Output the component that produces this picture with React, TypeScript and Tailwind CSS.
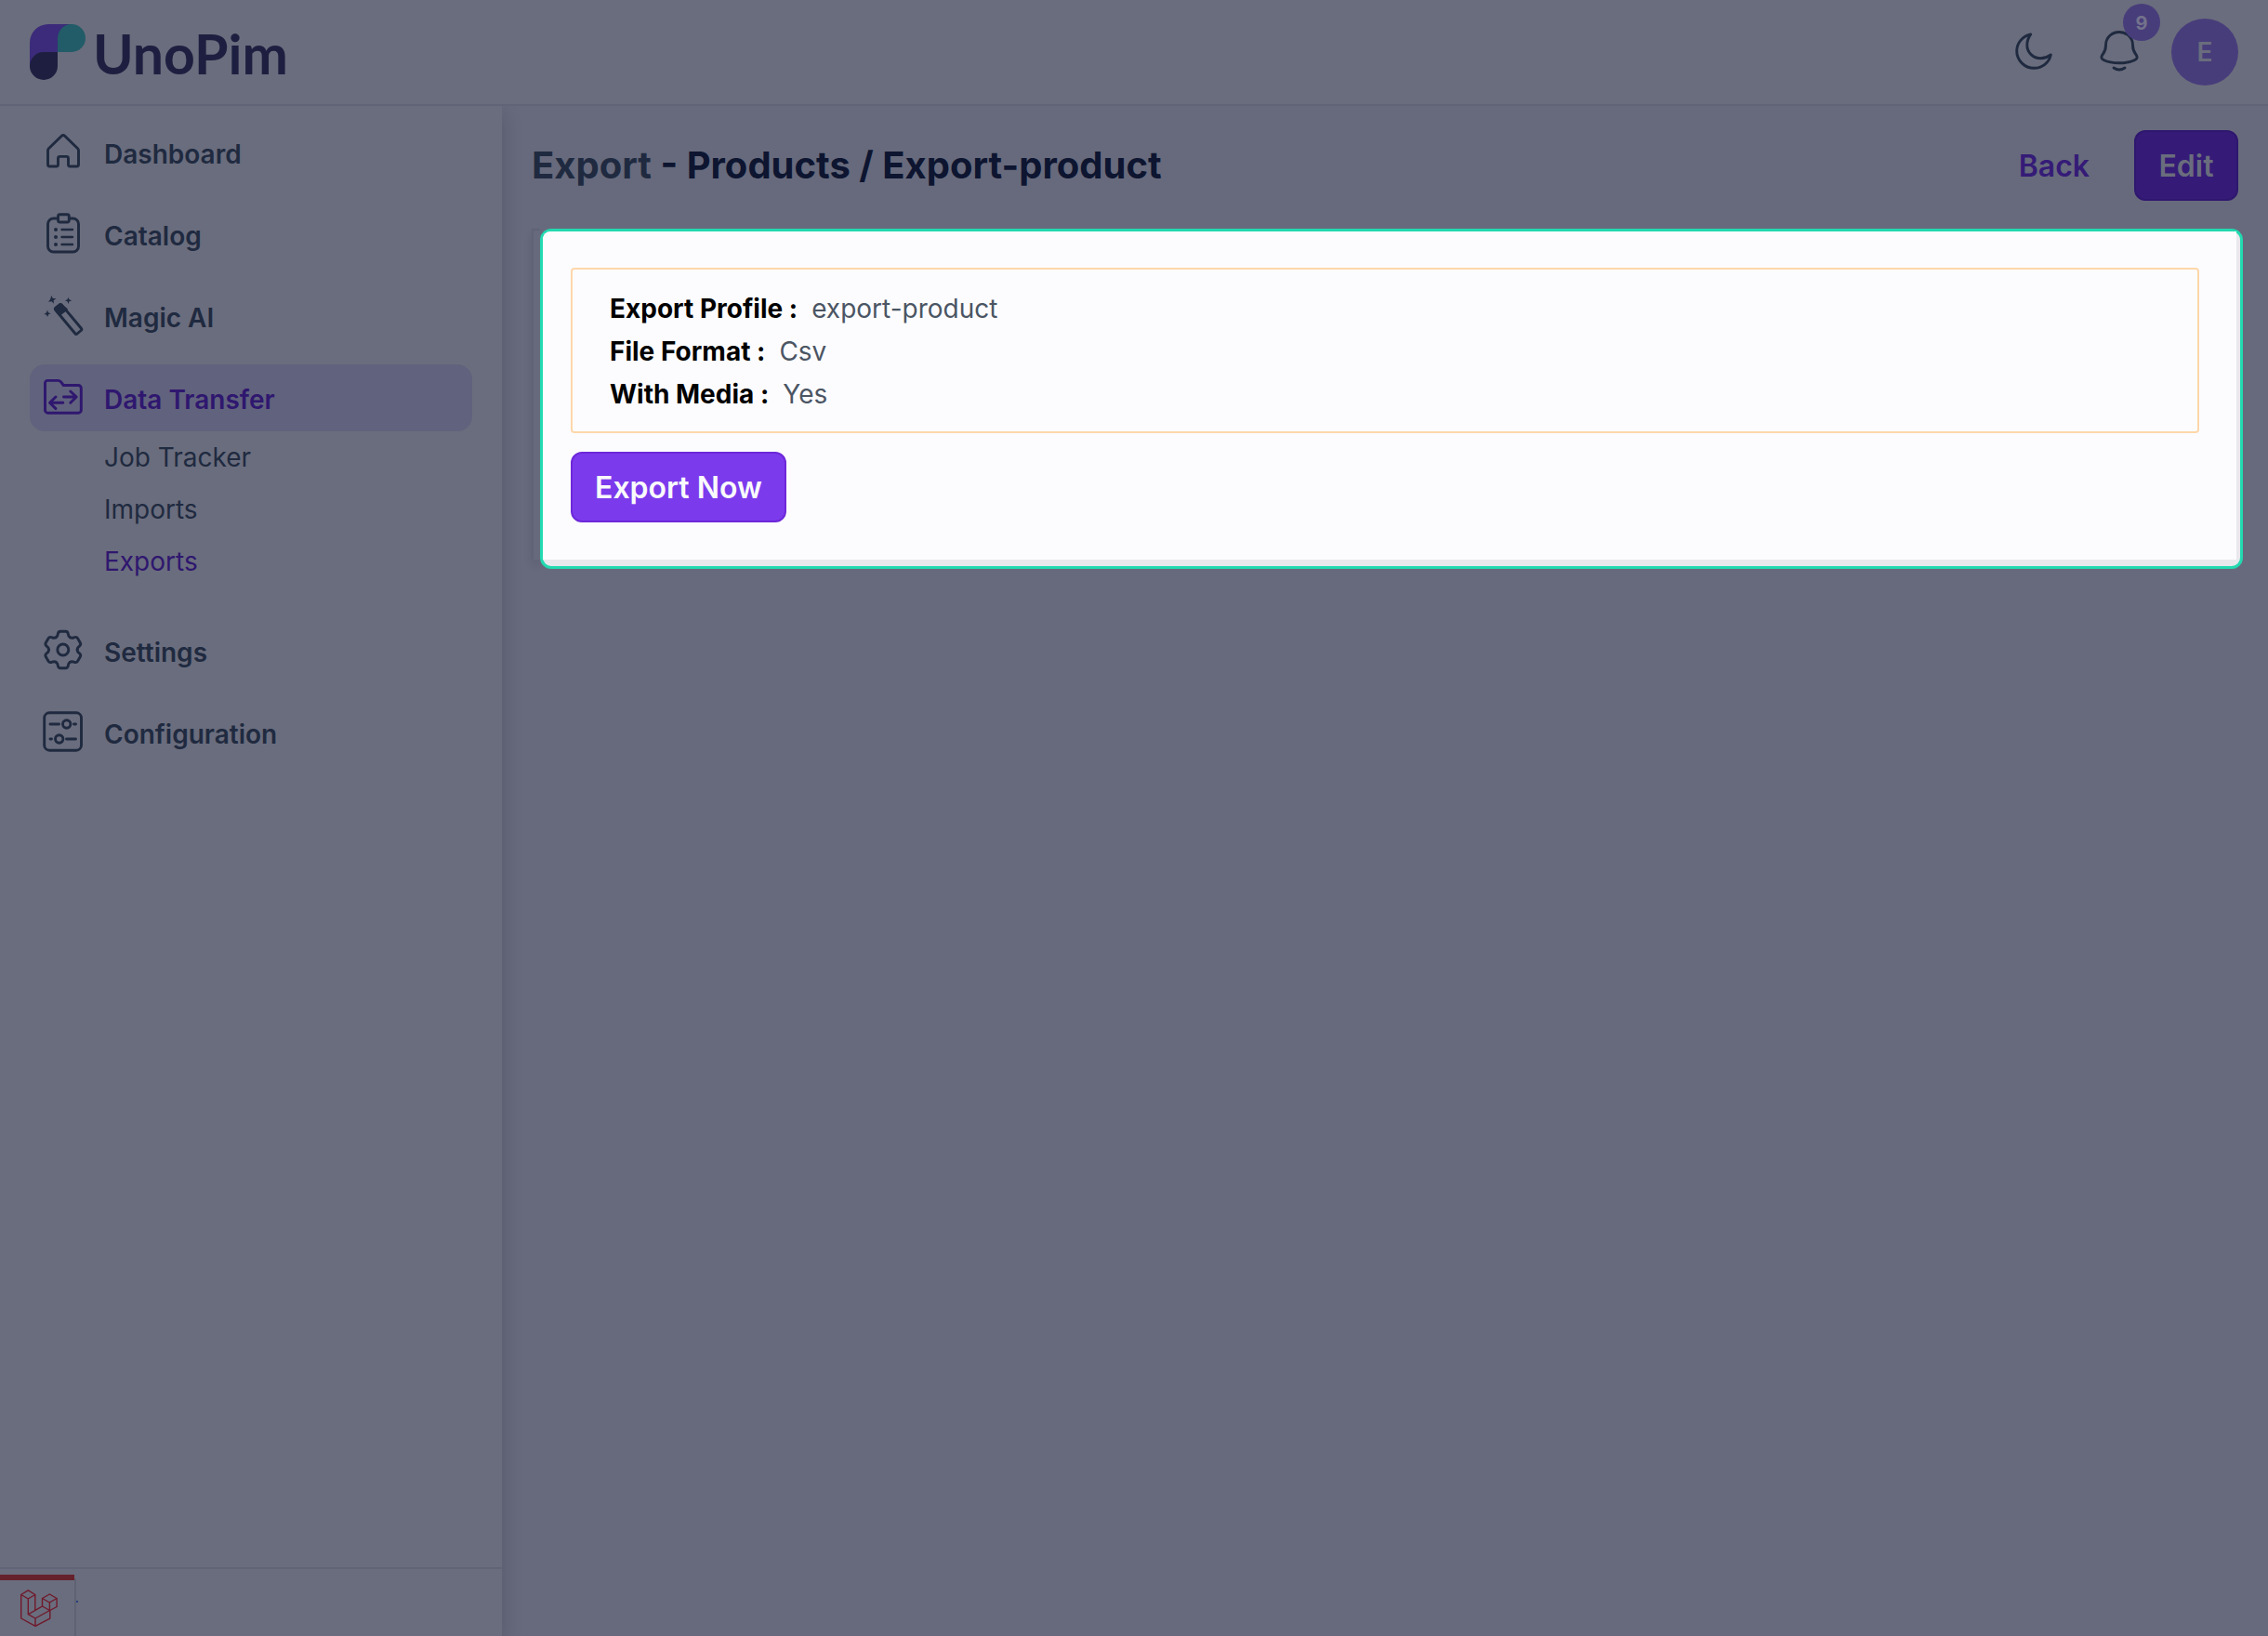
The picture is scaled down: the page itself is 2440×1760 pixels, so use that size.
import React from 'react';

type IconProps = { className?: string };

const iconProps = {
  viewBox: '0 0 48 48',
  fill: 'none',
  stroke: 'currentColor',
  strokeWidth: 2.9,
  strokeLinecap: 'round' as const,
  strokeLinejoin: 'round' as const,
  'aria-hidden': true,
};

const HomeIcon: React.FC<IconProps> = ({ className }) => (
  <svg {...iconProps} className={className}>
    <path d="M7.5 21.8a3 3 0 0 1 .9-2.1L22.3 6.2a2.4 2.4 0 0 1 3.4 0l13.9 13.5a3 3 0 0 1 .9 2.1V37a2 2 0 0 1-2 2h-7a2 2 0 0 1-2-2v-6.6a2 2 0 0 0-2-2h-7a2 2 0 0 0-2 2V37a2 2 0 0 1-2 2h-7a2 2 0 0 1-2-2z" />
  </svg>
);

const CatalogIcon: React.FC<IconProps> = ({ className }) => (
  <svg {...iconProps} className={className}>
    <path d="M18.5 7h-5a6 6 0 0 0-6 6v24a6 6 0 0 0 6 6h21a6 6 0 0 0 6-6V13a6 6 0 0 0-6-6h-4" />
    <rect x="18.5" y="2.8" width="11.8" height="8.2" rx="2" />
    <path d="M22.5 19H34M22.5 27H34M22.5 35H34" strokeWidth="2.4" />
    <g fill="currentColor" stroke="none">
      <circle cx="16" cy="19" r="2" />
      <circle cx="16" cy="27" r="2" />
      <circle cx="16" cy="35" r="2" />
    </g>
  </svg>
);

const MagicIcon: React.FC<IconProps> = ({ className }) => (
  <svg {...iconProps} className={className}>
    <path d="M20.2 11.9l-4.2 3.3a1.6 1.6 0 0 0-.2 2.3l21 25.3a1.6 1.6 0 0 0 2.2.2l4.2-3.5a1.6 1.6 0 0 0 .2-2.2L22.4 12.1a1.6 1.6 0 0 0-2.2-.2z" />
    <path d="M20.8 11.5l-5.5 4.5 5 6 7-5.2z" fill="currentColor" />
    <g fill="currentColor" stroke="none">
      <path d="M11.3 2l1.6 2.9 3.4.2-2.6 2.2.2 3.5-2.3-2.6-3.6.6 2.1-2.7z" />
      <path d="M29.5 3.8l1 2.5 2.7 1-2.7 1-1 2.7-1-2.7-2.6-1 2.6-1z" />
      <path d="M7 17.6l.9 2.6 2.7 1-2.5 1.1-.9 2.8-1.3-2.6-2.6-.6 2.5-1.3z" />
    </g>
  </svg>
);

const TransferIcon: React.FC<IconProps> = ({ className }) => (
  <svg {...iconProps} className={className}>
    <path d="M4.5 8a2.6 2.6 0 0 1 2.6-2.6h11.4a4 4 0 0 1 2.9 1.3l2.9 3.8h16a3 3 0 0 1 3 3v23.7a3 3 0 0 1-3 3H7.5a3 3 0 0 1-3-3z" />
    <path d="M24.5 23H38M31.8 17l6.4 6-6.4 6.3M23.8 29.3H10M16 23l-6.5 6.3L16 35.6" />
  </svg>
);

const SettingsIcon: React.FC<IconProps> = ({ className }) => (
  <svg {...iconProps} className={className}>
    <g transform="translate(23.8 23)">
      <circle r="6" />
      {[0, 60, 120, 180, 240, 300].map((angle) => (
        <path
          key={angle}
          transform={`rotate(${angle})`}
          d="M-7.65 -13.25Q-5.7 -14.4 -5.6 -16.6Q-5.2 -19.8 -2.8 -19.8H2.8Q5.2 -19.8 5.6 -16.6Q5.7 -14.4 7.65 -13.25"
        />
      ))}
    </g>
  </svg>
);

const ConfigIcon: React.FC<IconProps> = ({ className }) => (
  <svg {...iconProps} className={className}>
    <rect x="3.7" y="2.8" width="39.8" height="40.4" rx="5.5" />
    <path d="M10 15h9.5M35.5 15h2M10 31h1.5M27.5 31h10" />
    <circle cx="27.7" cy="15" r="4.2" />
    <circle cx="19.7" cy="31" r="4.2" />
  </svg>
);

const MoonIcon: React.FC<IconProps> = ({ className }) => (
  <svg {...iconProps} className={className}>
    <path d="M20.7 4.9C12 7 5.7 14 5.7 22.8c0 10.2 8.4 18.5 18.6 18.5 8.7 0 16.2-5.8 18-14.3-3.8 2.8-7 3.8-10.8 3.8-8.2 0-14.7-6.3-14.7-14.3 0-4.5 1.6-8.4 3.9-11.6z" />
  </svg>
);

const BellIcon: React.FC<IconProps> = ({ className }) => (
  <svg {...iconProps} className={className}>
    <path d="M24 2.5C15.7 2.5 9.5 8.7 9.5 16.5c0 4.6-.6 6.6-3 9.5-2.2 2.8-2.4 5 .6 6.5C12 35 18 35.8 24 35.8S36 35 40.9 32.5c3-1.5 2.8-3.7.6-6.5-2.4-2.9-3-4.9-3-9.5C38.5 8.7 32.3 2.5 24 2.5z" />
    <path d="M18 41q6 4 12 0" />
  </svg>
);

const LaravelIcon: React.FC<IconProps> = ({ className }) => (
  <svg viewBox="0 0 40 40" fill="none" stroke="currentColor" strokeWidth="1.4" strokeLinejoin="round" className={className} aria-hidden="true">
    <path d="M.7 5.5L8.3.8l7.5 4.7v17l4-2.3 3.7-2.2V9.5l7.8-4.5 7.8 4.5v9l-7.3 4v8.6L16 39.3.7 31z" />
    <path d="M.7 5.5L8.3 10l7.5-4.5M8.300 10v16.700l7.700 4.300 15.500-8.500-8-4.500M16 31v8.300M8.300 26.700l7.500-4.200M23.500 9.500l7.800 4.500 7.800-4.500M31.400 14v8.500" />
  </svg>
);

const Logo = () => (
  <a href="#" aria-label="UnoPim" className="flex items-center gap-2 text-[#1e1f40]">
    <svg viewBox="0 0 60 60" className="h-[60px] w-[60px]" aria-hidden="true">
      <path d="M0 20A20 20 0 0 1 20 0H46V30H15L0 45z" fill="#3b2b7a" />
      <path d="M30 15A15 15 0 0 1 45 0a15 15 0 0 1 0 30H30z" fill="#225c68" />
      <path d="M0 45A15 15 0 0 1 15 30H30V45A15 15 0 0 1 0 45z" fill="#1e1f40" />
    </svg>
    <span className="pt-1 font-['Lato',sans-serif] text-[59px] leading-[60px] font-bold">UnoPim</span>
  </a>
);

const menuItems = [
  { label: 'Dashboard', icon: HomeIcon },
  { label: 'Catalog', icon: CatalogIcon },
  { label: 'Magic AI', icon: MagicIcon },
  {
    label: 'Data Transfer',
    icon: TransferIcon,
    active: true,
    children: [
      { label: 'Job Tracker' },
      { label: 'Imports' },
      { label: 'Exports', active: true },
    ],
  },
  { label: 'Settings', icon: SettingsIcon },
  { label: 'Configuration', icon: ConfigIcon },
];

const details = [
  { label: 'Export Profile', value: 'export-product' },
  { label: 'File Format', value: 'Csv' },
  { label: 'With Media', value: 'Yes' },
];

const Header = () => (
  <header className="relative z-20 flex h-[114px] items-center justify-between border-b-2 border-[#616476] bg-[#6a6d7d] px-8">
    <Logo />
    <div className="flex items-center">
      <button type="button" aria-label="Toggle dark mode" className="mr-11 text-[#1f2a40]">
        <MoonIcon className="h-12 w-12" />
      </button>
      <button type="button" aria-label="Notifications" className="relative mr-8 text-[#1f2a40]">
        <BellIcon className="h-12 w-12" />
        <span className="absolute -top-7 left-7 flex h-10 w-10 items-center justify-center rounded-full bg-[#483d7b] pt-[2px] text-[20px] font-bold text-[#73728c]">
          9
        </span>
      </button>
      <button type="button" aria-label="Account" className="h-[72px] w-[72px] rounded-full bg-[#483d7b] text-[28px] font-semibold text-[#6a6d7d]">
        E
      </button>
    </div>
  </header>
);

const Sidebar = () => (
  <aside className="relative z-10 flex w-[540px] shrink-0 flex-col bg-[#6a6d7d] shadow-[0_8px_20px_rgba(20,22,50,0.2)]">
    <nav className="flex flex-col gap-4 px-8 pt-[14px] text-[28px]">
      {menuItems.map((item) => {
        const Icon = item.icon;
        return (
          <div key={item.label}>
            <a
              href="#"
              className={`flex h-[72px] items-center gap-5 rounded-2xl px-3 font-semibold ${
                item.active ? 'bg-[#61627d] text-[#2f176f]' : 'text-[#1f2a40]'
              }`}
            >
              <Icon className="h-12 w-12" />
              <span className="pt-[3px]">{item.label}</span>
            </a>
            {item.children && (
              <div className="flex flex-col pb-4 pl-20">
                {item.children.map((child) => (
                  <a
                    key={child.label}
                    href="#"
                    className={`h-14 leading-[56px] ${child.active ? 'text-[#2f176f]' : 'text-[#1f2a40]'}`}
                  >
                    {child.label}
                  </a>
                ))}
              </div>
            )}
          </div>
        );
      })}
    </nav>

    <div className="mt-auto flex border-t-2 border-[#616476] pt-[6px]">
      <button
        type="button"
        aria-label="Open debug bar"
        className="flex h-[66px] w-20 items-start border-t-[6px] border-[#65212c] pt-[10px] pl-[22px] text-[#70192b]"
      >
        <LaravelIcon className="h-10 w-10" />
      </button>
      <div className="mt-1 w-[2px] bg-[#5f6273]" />
      <div className="mt-7 h-[2px] w-[2px] bg-[#23407a]" />
    </div>
  </aside>
);

const App = () => (
  <div className="flex min-h-screen flex-col bg-[#676a7c] font-['Inter',sans-serif]">
    <Header />
    <div className="flex flex-1">
      <Sidebar />
      <main className="min-w-0 flex-1 px-8 pt-[26px]">
        <div className="flex items-center justify-between">
          <h1 className="text-[40px] leading-[60px] font-bold text-[#0d1530]">
            <span className="text-[#1f2a40]">Export</span> - Products / Export-product
          </h1>
          <div className="flex items-center text-[32px] leading-[48px] font-semibold">
            <a href="#" className="mr-12 pt-[2px] text-[#351b77]">
              Back
            </a>
            <button type="button" className="min-w-28 rounded-xl border-2 border-[#2f176f] bg-[#351b77] px-6 pt-[13px] pb-[11px] text-[#6a6d7d]">
              Edit
            </button>
          </div>
        </div>

        <div className="mt-[30px] -mr-[5px] flex">
          <div className="mb-[10px] w-[9px] shrink-0 border-t-2 border-l-2 border-[#606375] shadow-[0_6px_8px_rgba(20,22,50,0.1)]" />
          <section className="min-w-0 flex-1 rounded-xl border-[3px] border-[#22d9b0] bg-[#e9e9ed]">
            <div className="mr-1 mb-[7px] rounded-tl-lg bg-[#fcfcff] pt-[39px] pr-10 pb-10 pl-[30px]">
              <dl className="mb-5 rounded-sm border-2 border-[#fed7aa] px-10 pt-[19px] pb-[17px] text-[28px] leading-[46px]">
                {details.map((detail) => (
                  <div key={detail.label} className="flex gap-[15px]">
                    <dt className="font-bold text-black">{detail.label} :</dt>
                    <dd className="text-[#4b5563]">{detail.value}</dd>
                  </div>
                ))}
              </dl>
              <button
                type="button"
                className="rounded-xl border-2 border-[#6d28d9] bg-[#7c3aed] px-6 pt-[13px] pb-[11px] text-[32px] leading-[48px] font-semibold text-[#f9fafb]"
              >
                Export Now
              </button>
            </div>
          </section>
        </div>
      </main>
    </div>
  </div>
);

export default App;
